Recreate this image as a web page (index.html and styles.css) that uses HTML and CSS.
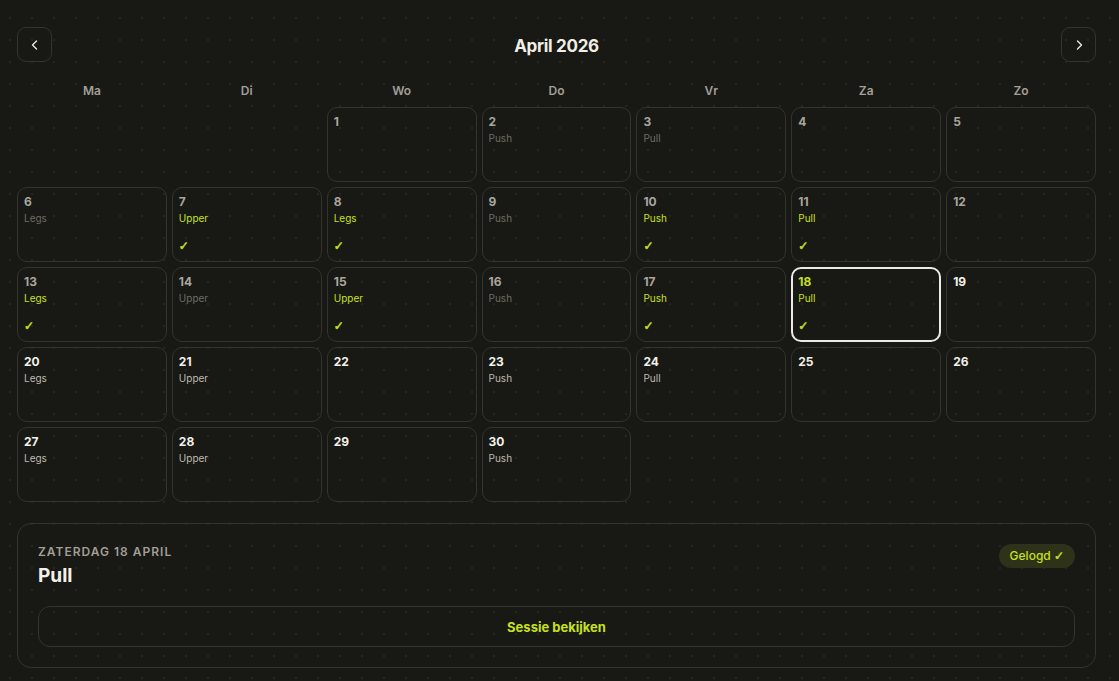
FILE: index.html
```html
<!DOCTYPE html>
<html lang="nl">
<head>
<meta charset="utf-8">
<title>April 2026</title>
<link rel="stylesheet" href="styles.css">
</head>
<body>
<div class="page">
  <header class="topbar">
    <button class="nav-btn" aria-label="Vorige maand">
      <svg width="14" height="14" viewBox="0 0 14 14"><path d="M8.5 3 L4.5 7 L8.5 11" fill="none" stroke="#e8e6df" stroke-width="1.4" stroke-linecap="round" stroke-linejoin="round"/></svg>
    </button>
    <h1 class="month">April 2026</h1>
    <button class="nav-btn" aria-label="Volgende maand">
      <svg width="14" height="14" viewBox="0 0 14 14"><path d="M5.5 3 L9.5 7 L5.5 11" fill="none" stroke="#e8e6df" stroke-width="1.4" stroke-linecap="round" stroke-linejoin="round"/></svg>
    </button>
  </header>

  <div class="weekdays">
    <span>Ma</span><span>Di</span><span>Wo</span><span>Do</span><span>Vr</span><span>Za</span><span>Zo</span>
  </div>

  <div class="grid">
    <div class="blank"></div>
    <div class="blank"></div>
    <div class="cell past"><span class="num">1</span></div>
    <div class="cell past"><span class="num">2</span><span class="lbl">Push</span></div>
    <div class="cell past"><span class="num">3</span><span class="lbl">Pull</span></div>
    <div class="cell past"><span class="num">4</span></div>
    <div class="cell past"><span class="num">5</span></div>

    <div class="cell past"><span class="num">6</span><span class="lbl">Legs</span></div>
    <div class="cell past done"><span class="num">7</span><span class="lbl">Upper</span><span class="chk">✓</span></div>
    <div class="cell past done"><span class="num">8</span><span class="lbl">Legs</span><span class="chk">✓</span></div>
    <div class="cell past"><span class="num">9</span><span class="lbl">Push</span></div>
    <div class="cell past done"><span class="num">10</span><span class="lbl">Push</span><span class="chk">✓</span></div>
    <div class="cell past done"><span class="num">11</span><span class="lbl">Pull</span><span class="chk">✓</span></div>
    <div class="cell past"><span class="num">12</span></div>

    <div class="cell past done"><span class="num">13</span><span class="lbl">Legs</span><span class="chk">✓</span></div>
    <div class="cell past"><span class="num">14</span><span class="lbl">Upper</span></div>
    <div class="cell past done"><span class="num">15</span><span class="lbl">Upper</span><span class="chk">✓</span></div>
    <div class="cell past"><span class="num">16</span><span class="lbl">Push</span></div>
    <div class="cell past done"><span class="num">17</span><span class="lbl">Push</span><span class="chk">✓</span></div>
    <div class="cell today done"><span class="num">18</span><span class="lbl">Pull</span><span class="chk">✓</span></div>
    <div class="cell future"><span class="num">19</span></div>

    <div class="cell future"><span class="num">20</span><span class="lbl">Legs</span></div>
    <div class="cell future"><span class="num">21</span><span class="lbl">Upper</span></div>
    <div class="cell future"><span class="num">22</span></div>
    <div class="cell future"><span class="num">23</span><span class="lbl">Push</span></div>
    <div class="cell future"><span class="num">24</span><span class="lbl">Pull</span></div>
    <div class="cell future"><span class="num">25</span></div>
    <div class="cell future"><span class="num">26</span></div>

    <div class="cell future"><span class="num">27</span><span class="lbl">Legs</span></div>
    <div class="cell future"><span class="num">28</span><span class="lbl">Upper</span></div>
    <div class="cell future"><span class="num">29</span></div>
    <div class="cell future"><span class="num">30</span><span class="lbl">Push</span></div>
  </div>

  <section class="detail">
    <div class="detail-head">
      <div>
        <div class="date">ZATERDAG 18 APRIL</div>
        <div class="title">Pull</div>
      </div>
      <span class="badge">Gelogd <span class="badge-chk">✓</span></span>
    </div>
    <button class="session-btn">Sessie bekijken</button>
  </section>
</div>
</body>
</html>
```

FILE: styles.css
```css
* { box-sizing: border-box; }

html, body {
  margin: 0;
  height: 100%;
}

body {
  background-color: #181814;
  background-image: radial-gradient(circle, #26261f 1px, transparent 1.3px);
  background-size: 22px 22px;
  background-position: -1px 7px;
  font-family: Inter, "Liberation Sans", sans-serif;
  color: #ecebe4;
}

.page {
  padding: 27px 23px 0 17px;
}

.topbar {
  display: flex;
  align-items: center;
  justify-content: space-between;
  height: 35px;
}

.nav-btn {
  width: 35px;
  height: 35px;
  border: 1px solid #34342e;
  border-radius: 9px;
  background: transparent;
  display: flex;
  align-items: center;
  justify-content: center;
  padding: 0;
}

.month {
  margin: 2px 0 0 0;
  font-size: 17px;
  font-weight: 700;
  letter-spacing: -0.3px;
  color: #f0eee6;
}

.weekdays {
  display: grid;
  grid-template-columns: repeat(7, 1fr);
  gap: 5px;
  margin-top: 20px;
  height: 18px;
  line-height: 18px;
  text-align: center;
  font-size: 12px;
  font-weight: 600;
  color: #a29f97;
}

.grid {
  display: grid;
  grid-template-columns: repeat(7, 1fr);
  grid-auto-rows: 75px;
  gap: 5px;
  margin-top: 7px;
}

.cell {
  border: 1px solid #34342e;
  border-radius: 10px;
  padding: 6px 6px 0 6px;
  display: flex;
  flex-direction: column;
  position: relative;
}

.num {
  font-size: 12px;
  font-weight: 700;
  line-height: 16px;
}

.lbl {
  font-size: 10px;
  line-height: 14px;
  margin-top: 1px;
}

.chk {
  position: absolute;
  left: 6px;
  top: 51px;
  font-family: "DejaVu Sans", sans-serif;
  font-size: 12px;
  font-weight: 700;
  line-height: 14px;
  color: #c6e11f;
  -webkit-text-stroke: 0.6px #c6e11f;
}

.past .num { color: #a9a69e; }
.past .lbl { color: #6e6c65; }
.done .lbl { color: #c6e11f; }
.future .num { color: #f2f0e9; }
.future .lbl { color: #bdbab2; }

.today {
  border: 2px solid #eceae2;
  padding: 5px 5px 0 5px;
}
.today .num { color: #c6e11f; }
.today .chk { left: 5px; top: 50px; }

.detail {
  margin-top: 21px;
  border: 1px solid #34342e;
  border-radius: 14px;
  padding: 20px 20px 20px 20px;
}

.detail-head {
  display: flex;
  justify-content: space-between;
  align-items: flex-start;
}

.date {
  font-size: 12px;
  font-weight: 600;
  letter-spacing: 1px;
  color: #a29f97;
  line-height: 16px;
}

.title {
  margin-top: 4px;
  font-size: 19px;
  font-weight: 700;
  color: #f2f0e9;
  line-height: 24px;
}

.badge {
  background: #2e3219;
  color: #c6e11f;
  font-size: 12px;
  font-weight: 500;
  border-radius: 12px;
  padding: 4px 11px;
  line-height: 16px;
  height: 24px;
}

.badge-chk {
  font-family: "DejaVu Sans", sans-serif;
  font-weight: 700;
  -webkit-text-stroke: 0.5px #c6e11f;
}

.session-btn {
  margin-top: 18px;
  width: 100%;
  height: 41px;
  background: transparent;
  border: 1px solid #34342e;
  border-radius: 12px;
  font-family: inherit;
  font-size: 13px;
  font-weight: 700;
  color: #c6e11f;
}
```
